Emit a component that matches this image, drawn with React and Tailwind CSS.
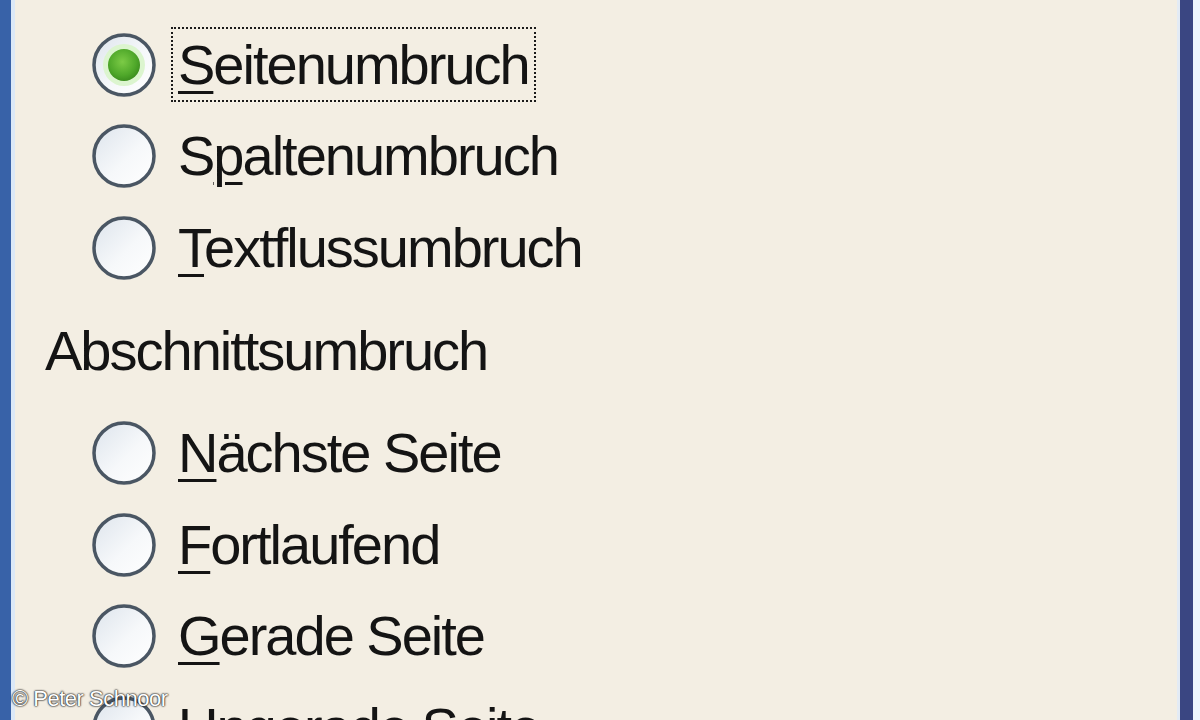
import React from 'react';

const options1 = [
  { key: 'S', rest: 'eitenumbruch', checked: true },
  { key: 'p', pre: 'S', rest: 'altenumbruch' },
  { key: 'T', rest: 'extflussumbruch' },
];

const options2 = [
  { key: 'N', rest: 'ächste Seite' },
  { key: 'F', rest: 'ortlaufend' },
  { key: 'G', rest: 'erade Seite' },
  { key: 'U', rest: 'ngerade Seite' },
];

const Radio = ({ checked }) => (
  <svg width="66" height="66" viewBox="0 0 66 66" className="shrink-0">
    <defs>
      <linearGradient id="radioFill" x1="0" y1="0" x2="1" y2="1">
        <stop offset="0" stopColor="#dde4ec" />
        <stop offset="0.55" stopColor="#f6f8fa" />
        <stop offset="1" stopColor="#ffffff" />
      </linearGradient>
      <radialGradient id="dotFill" cx="0.45" cy="0.4" r="0.6">
        <stop offset="0" stopColor="#7ccb46" />
        <stop offset="0.7" stopColor="#4fa82a" />
        <stop offset="1" stopColor="#3d8f1f" />
      </radialGradient>
    </defs>
    <circle cx="33" cy="33" r="30" fill="url(#radioFill)" stroke="#4a5663" strokeWidth="3.5" />
    {checked && (
      <>
        <circle cx="33" cy="33" r="21" fill="#dcf5cf" />
        <circle cx="33" cy="33" r="16" fill="url(#dotFill)" />
      </>
    )}
  </svg>
);

const Option = ({ opt }) => (
  <div className="flex h-[91.5px] shrink-0 items-center pl-[76px]">
    <Radio checked={opt.checked} />
    <span
      className={`ml-[14px] flex h-[75px] items-center border-[2.5px] px-[5px] ${
        opt.checked ? 'border-dotted border-[#1a1a1a]' : 'border-transparent'
      }`}
    >
      <span className="leading-none">
        {opt.pre}
        <span className="underline decoration-[3px] underline-offset-[7px]">{opt.key}</span>
        {opt.rest}
      </span>
    </span>
  </div>
);

export default function App() {
  return (
    <div
      className="relative flex h-[720px] w-[1200px] overflow-hidden bg-[#f3eee3] text-[56px] tracking-[-2px] text-[#141414]"
      style={{ fontFamily: '"Liberation Sans", Arial, sans-serif' }}
    >
      <div className="w-[11px] shrink-0 bg-[#3862a8]" />
      <div className="w-[4px] shrink-0 bg-[#dbe8f7]" />
      <div className="flex flex-1 flex-col pt-[19px]">
        {options1.map((o) => (
          <Option key={o.key} opt={o} />
        ))}
        <div className="flex h-[114px] shrink-0 items-center pl-[30px]">
          <span className="leading-none">Abschnittsumbruch</span>
        </div>
        {options2.map((o) => (
          <Option key={o.key} opt={o} />
        ))}
      </div>
      <div className="w-[3px] shrink-0 bg-[#e3ebf5]" />
      <div className="w-[13px] shrink-0 bg-[#3a4682]" />
      <div className="w-[7px] shrink-0 bg-[#eef6fd]" />

      <div className="absolute bottom-[10px] left-[12px] text-[22px] tracking-[-0.5px] leading-none text-white [text-shadow:0_0_2px_#333,0_0_2px_#333,0_0_1px_#000]">
        © Peter Schnoor
      </div>
    </div>
  );
}
